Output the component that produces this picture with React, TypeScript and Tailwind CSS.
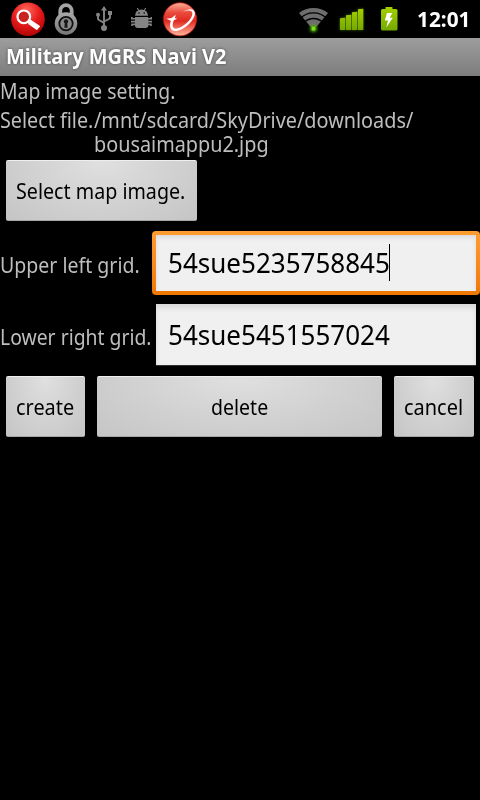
import { FC, ReactNode } from "react";

type TextProps = { children: ReactNode; className?: string };

const Text: FC<TextProps> = ({ children, className = "" }) => (
  <span className={`block origin-left whitespace-pre ${className}`}>{children}</span>
);

const Button: FC<TextProps> = ({ children, className = "" }) => (
  <button
    className={`flex h-[61px] items-center rounded-[2px] border-t border-b border-t-[#efefef] border-b-[#a6a6a6] bg-[radial-gradient(ellipse_at_50%_0%,#e0e0e0_0%,#d2d2d2_50%,#c5c5c5_100%)] pt-px text-[21px] leading-6 text-black ${className}`}
  >
    {children}
  </button>
);

const StatusIcons: FC = () => (
  <svg width="480" height="38" viewBox="0 0 480 38" className="block">
    <defs>
      <radialGradient id="red" cx="0.45" cy="0.25" r="0.8">
        <stop offset="0" stopColor="#ff6a5c" />
        <stop offset="0.5" stopColor="#e81c1c" />
        <stop offset="1" stopColor="#a80000" />
      </radialGradient>
      <linearGradient id="trend" x1="0" y1="0" x2="0" y2="1">
        <stop offset="0" stopColor="#f9b09c" />
        <stop offset="0.3" stopColor="#ea4a3c" />
        <stop offset="0.55" stopColor="#e02a22" />
        <stop offset="1" stopColor="#ffb8a0" />
      </linearGradient>
      <linearGradient id="lock" x1="0" y1="0" x2="0" y2="1">
        <stop offset="0" stopColor="#aaa" />
        <stop offset="1" stopColor="#777" />
      </linearGradient>
      <linearGradient id="green" x1="0" y1="0" x2="0" y2="1">
        <stop offset="0" stopColor="#a4d000" />
        <stop offset="1" stopColor="#74a800" />
      </linearGradient>
      <filter id="glow" x="-50%" y="-50%" width="200%" height="200%">
        <feGaussianBlur stdDeviation="1.5" />
      </filter>
    </defs>

    {/* search */}
    <circle cx="28" cy="19.3" r="16.8" fill="url(#red)" />
    <circle cx="23.8" cy="16.8" r="6.3" fill="#c92020" stroke="#fff" strokeWidth="2.2" />
    <path d="M28.3 21.3 L30.3 20.4 L39.3 26.4 L36.7 29.3 L29 23.6 Z" fill="#fff" stroke="#fff" strokeWidth="1.4" strokeLinejoin="round" />

    {/* lock */}
    <path d="M60.3 17 V10.8 a5.7 5.7 0 0 1 11.4 0 V17" fill="none" stroke="#a3a3a3" strokeWidth="3.8" />
    <circle cx="66" cy="23.6" r="11.3" fill="url(#lock)" />
    <circle cx="66" cy="23.6" r="6.7" fill="#888" stroke="#101010" strokeWidth="1.8" />
    <path d="M66 19.3 a2.2 2.2 0 0 1 1.3 4 L67.6 27.8 H64.4 L64.7 23.3 a2.2 2.2 0 0 1 1.3 -4Z" fill="#181818" />

    {/* usb */}
    <g fill="#858585">
      <path d="M104 6 L107 10.5 H101 Z" />
      <circle cx="104" cy="28" r="3" />
      <circle cx="98" cy="14.8" r="2" />
      <rect x="108" y="11" width="4" height="4" />
      <path
        d="M104 9 V28 M98 15 V18.5 Q98 19.5 99 20 L104 22.8 M110 14 V17.5 Q110 18.5 109 19 L104 21.5"
        fill="none"
        stroke="#858585"
        strokeWidth="1.9"
      />
    </g>

    {/* android */}
    <g fill="#858585">
      <path d="M135 15.7 a6.5 6.2 0 0 1 13 0 Z" />
      <path d="M137.3 8 L139 11 M145.7 8 L144 11" stroke="#858585" strokeWidth="1.1" />
      <path d="M135 17 H148.3 V25.3 Q148.3 28 145.6 28 H137.7 Q135 28 135 25.3 Z" />
      <path
        d="M135 18.7 H131.8 V17 M135 21.6 H131 M135 24.4 H132 V26 M148 18.7 H151.2 V17 M148 21.6 H152 M148 24.4 H151 V26"
        fill="none"
        stroke="#858585"
        strokeWidth="1.6"
      />
      <circle cx="139" cy="13" r="0.8" fill="#000" />
      <circle cx="144.2" cy="13" r="0.8" fill="#000" />
    </g>

    {/* antivirus */}
    <circle cx="180" cy="19.3" r="16.6" fill="url(#trend)" stroke="#b81410" strokeWidth="0.8" />
    <path
      d="M166.3 18.8 L171.5 18 L175.8 14.8 L174.8 18.3 L177.3 18.8 L173.8 20.3 C172.3 24 172 27.8 174.8 28.6 C180.5 29.8 191.8 20 192.4 14 C192.7 10.3 188.5 9.6 182.5 12 C189.5 7.8 195.4 8.6 194.9 14 C194 21.5 182.5 31.5 174.8 31 C170 30.6 169.3 26 170.8 20.7 Z"
      fill="#fff"
    />

    {/* wifi */}
    <path d="M299 13 A23.5 23.5 0 0 1 328 13 L316.3 27 H310.7 Z" fill="#6d6d6d" />
    <g fill="none" stroke="#000" strokeWidth="1.4">
      <circle cx="313.5" cy="31.5" r="18.6" />
      <circle cx="313.5" cy="31.5" r="13" />
    </g>
    <circle cx="313.5" cy="28.5" r="3.5" fill="#4fb000" filter="url(#glow)" />
    <rect x="311.6" y="26.8" width="3.8" height="3.6" rx="1" fill="#7be01a" />

    {/* signal */}
    <path d="M340 18h5v12h-5z M346 15h5v15h-5z M352 12h5v18h-5z M358 9h5v21h-5z" fill="#5b8a00" opacity="0.8" filter="url(#glow)" />
    <path d="M340 18.3l5.3 -.6v12.3h-5.3z M346 15.3l5.3 -.6v15.3h-5.3z M352 12.3l5.3 -.6v18.3h-5.3z M358 9.3l5.3 -.6v21.3h-5.3z" fill="url(#green)" />

    {/* battery */}
    <path d="M385.5 9 V7.5 Q385.5 7 386 7 H392 Q392.5 7 392.5 7.5 V9 H396 Q397.5 9 397.5 10.5 V29 Q397.5 30.5 396 30.5 H382.5 Q381 30.5 381 29 V10.5 Q381 9 382.5 9 Z" fill="url(#green)" />
    <path d="M387 13 H392.3 L389.7 17.7 H392.8 L386.3 27.5 L388 20.6 H384.8 Z" fill="#fff" />
  </svg>
);

const App: FC = () => (
  <div className="flex h-[800px] w-[480px] flex-col overflow-hidden bg-black font-['Noto_Sans',sans-serif] text-[21px] leading-6 text-[#bebebe]">
    <header className="relative h-[38px] shrink-0">
      <StatusIcons />
      <div className="absolute top-[7px] left-[417px] font-bold text-white">
        <Text className="scale-x-[0.99]">12:01</Text>
      </div>
    </header>
    <div className="h-[38px] shrink-0 bg-linear-to-b from-[#9d9d9d] to-[#7d7d7d] pt-1.5 pl-1.5 font-bold text-white [text-shadow:0_0_3px_#444]">
      <Text className="scale-x-[0.95]">Military MGRS Navi V2</Text>
    </div>

    <main className="flex flex-col">
      <div className="pt-[3px]">
        <Text className="scale-x-[0.922]">Map image setting.</Text>
      </div>
      <div className="flex pt-[5px]">
        <div className="w-[94px] shrink-0">
          <Text className="scale-x-[0.94]">Select file.</Text>
        </div>
        <Text className="scale-x-[0.944]">{"/mnt/sdcard/SkyDrive/downloads/\nbousaimappu2.jpg"}</Text>
      </div>

      <div className="pt-1 pl-1.5">
        <Button className="w-[191px] pl-2.5">
          <Text className="scale-x-[0.937]">Select map image.</Text>
        </Button>
      </div>

      <div className="mt-[10px] flex h-16 items-center">
        <div className="w-[152px] shrink-0 pt-1">
          <Text className="scale-x-[0.93]">Upper left grid.</Text>
        </div>
        <div className="h-16 w-[328px] rounded-[4px] bg-linear-to-b from-[#ff9d30] to-[#f07800] p-1">
          <div className="flex h-14 items-center bg-[#f0f0f0] pl-3 text-[27px] leading-8 text-black shadow-[inset_0_3px_4px_#dcdcdc]">
            <div className="w-[221px] shrink-0">
              <Text className="scale-x-[0.964]">54sue5235758845</Text>
            </div>
            <div className="mb-0.5 h-[37px] w-px bg-black" />
          </div>
        </div>
      </div>

      <div className="mt-[9px] flex h-[62px] items-center">
        <div className="w-[156px] shrink-0 pt-1">
          <Text className="scale-x-[0.922]">Lower right grid.</Text>
        </div>
        <div className="flex h-[62px] w-80 items-center border-b border-[#303030] bg-[#f0f0f0] pl-3 text-[27px] leading-8 text-black shadow-[inset_0_4px_5px_#d8d8d8]">
          <Text className="scale-x-[0.964]">54sue5451557024</Text>
        </div>
      </div>

      <div className="mt-2.5 flex gap-3 pl-1.5">
        <Button className="w-[79px] pl-2.5">
          <Text className="scale-x-[0.948]">create</Text>
        </Button>
        <Button className="w-[285px] pl-[114px]">
          <Text className="scale-x-[0.93]">delete</Text>
        </Button>
        <Button className="w-20 pl-2.5">
          <Text className="scale-x-[0.95]">cancel</Text>
        </Button>
      </div>
    </main>
  </div>
);

export default App;
